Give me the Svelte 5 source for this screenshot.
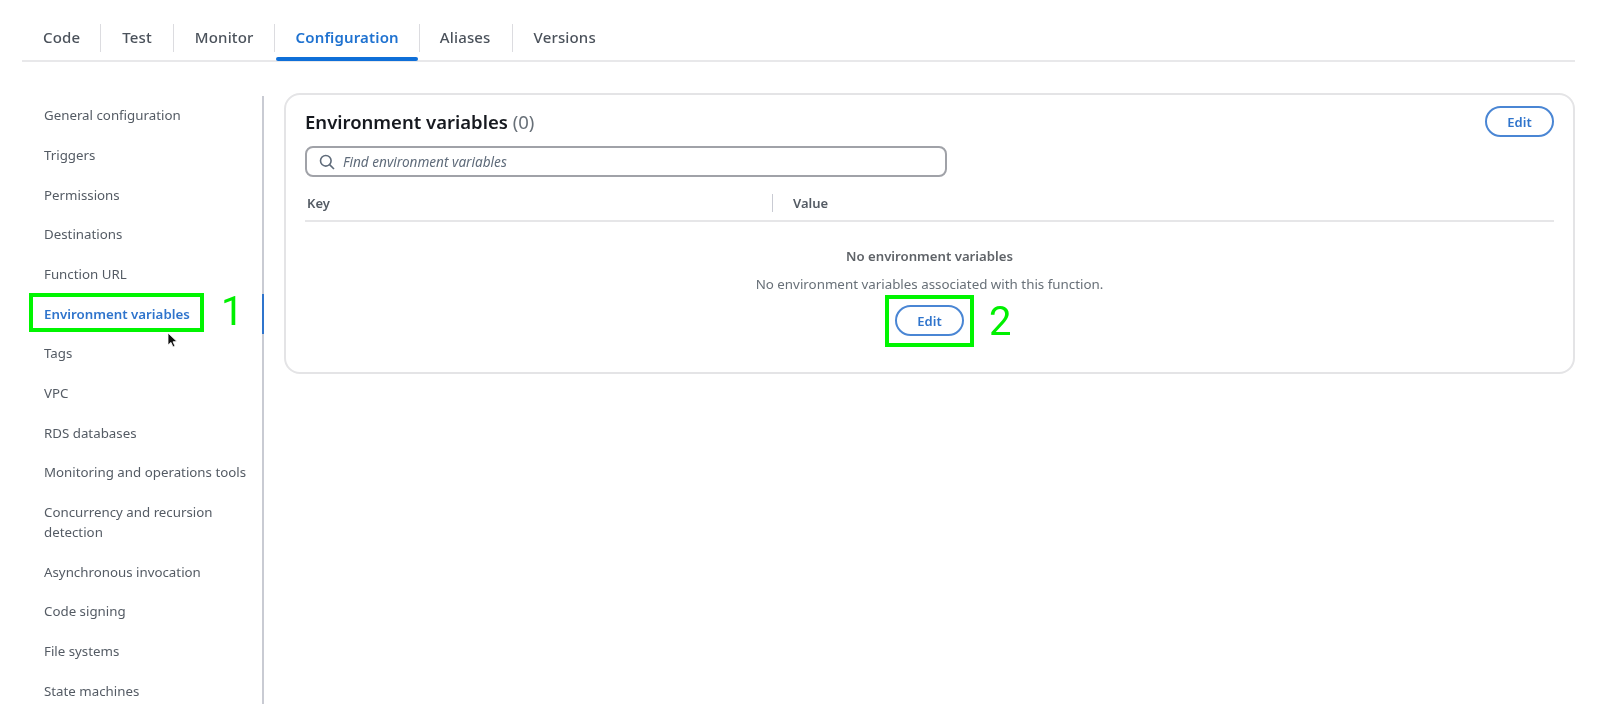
<script>
  const tabs = ['Code', 'Test', 'Monitor', 'Configuration', 'Aliases', 'Versions'];
  const sections = [
    'General configuration', 'Triggers', 'Permissions', 'Destinations', 'Function URL',
    'Environment variables', 'Tags', 'VPC', 'RDS databases', 'Monitoring and operations tools',
    'Concurrency and recursion detection', 'Asynchronous invocation', 'Code signing',
    'File systems', 'State machines'
  ];
  const activeTab = 'Configuration';
  const activeSection = 'Environment variables';
</script>

<div class="page">
  <div class="tabs">
    {#each tabs as tab}
      <div class="tab" class:active={tab === activeTab}><span>{tab}</span></div>
    {/each}
  </div>

  <div class="content">
    <nav class="side">
      {#each sections as section}
        <a class="link" class:current={section === activeSection} href="#top">{section}</a>
      {/each}
    </nav>

    <section class="card">
      <div class="card-head">
        <h2>Environment variables <span class="count">(0)</span></h2>
        <button class="edit">Edit</button>
      </div>
      <div class="search">
        <svg width="16" height="16" viewBox="0 0 16 16" fill="none" stroke="#5f6b7a" stroke-width="1.6">
          <circle cx="6.8" cy="6.8" r="5.3" />
          <path d="M10.6 10.6 L15 15" />
        </svg>
        <span>Find environment variables</span>
      </div>
      <div class="table-head">
        <div class="col key">Key</div>
        <div class="col value">Value</div>
      </div>
      <div class="empty">
        <strong>No environment variables</strong>
        <p>No environment variables associated with this function.</p>
        <button class="edit">Edit</button>
      </div>
    </section>
  </div>

  <div class="mark mark-one"></div>
  <div class="num num-one">1</div>
  <div class="mark mark-two"></div>
  <div class="num num-two">2</div>
  <svg class="cursor" width="12" height="18" viewBox="0 0 12 18">
    <path d="M1 1 L1 13 L4 10.4 L6 15 L8 14 L6 9.8 L10 9.6 Z" fill="#111" stroke="#fff" stroke-width="0.8" />
  </svg>
</div>

<style>
  :global(body) {
    margin: 0;
    background: #fff;
  }

  .page {
    position: relative;
    width: 1597px;
    height: 704px;
    overflow: hidden;
    box-sizing: border-box;
    padding: 24px 22px 0;
    font-family: "Noto Sans", "Open Sans", sans-serif;
    color: #545b64;
    filter: blur(0.4px);
  }

  .tabs {
    display: flex;
    height: 36px;
    border-bottom: 2px solid #e8e8ea;
  }

  .tab {
    position: relative;
    box-sizing: border-box;
    height: 28px;
    display: flex;
    align-items: center;
    padding: 0 20px 2px 21px;
    border-right: 1px solid #dcdce0;
    font-size: 15px;
    font-weight: 500;
    letter-spacing: 0.15px;
    color: #4b525b;
  }

  .tab:nth-child(2) {
    padding-right: 21px;
  }

  .tab:last-child {
    border-right: 0;
  }

  .tab.active {
    color: #1f72d0;
    font-weight: 600;
  }

  .tab.active + .tab {
    padding-left: 20px;
    padding-right: 21px;
  }

  .tab.active::after {
    content: '';
    position: absolute;
    left: 1px;
    right: 1px;
    top: 33px;
    height: 4px;
    border-radius: 2px;
    background: #0f6fd8;
  }

  .content {
    display: flex;
    align-items: flex-start;
    margin-top: 31.5px;
  }

  .side {
    box-sizing: border-box;
    width: 242px;
    height: 620px;
    margin-top: 2px;
    padding-right: 12px;
    border-right: 2px solid #c9cbd3;
    flex: none;
    display: flex;
    flex-direction: column;
    position: relative;
  }

  .link {
    display: block;
    padding: 9.7px 0 10px 22px;
    font-size: 13.3px;
    line-height: 20px;
    color: #545b64;
    text-decoration: none;
  }

  .link.current {
    color: #2f74cc;
    font-weight: 600;
    position: relative;
  }

  .link.current::after {
    content: '';
    position: absolute;
    top: 0;
    bottom: 0;
    right: -14px;
    width: 2px;
    background: #2f74cc;
  }

  .card {
    box-sizing: border-box;
    width: 1291px;
    height: 281px;
    margin-left: 20px;
    margin-top: -0.5px;
    padding: 10px 19px 0;
    border: 2px solid #e4e4e6;
    border-radius: 16px;
  }

  .card-head {
    display: flex;
    align-items: center;
    justify-content: space-between;
    height: 33px;
  }

  h2 {
    margin: 0;
    font-size: 18.5px;
    font-weight: 600;
    color: #16191f;
  }

  .count {
    font-weight: 400;
    color: #687078;
  }

  .edit {
    box-sizing: border-box;
    width: 69px;
    height: 31px;
    border: 2px solid #4a86d4;
    border-radius: 16px;
    background: #fff;
    color: #2f74cc;
    font: 600 13px "Noto Sans", sans-serif;
  }

  .search {
    box-sizing: border-box;
    display: flex;
    align-items: center;
    gap: 8px;
    width: 642px;
    height: 31px;
    margin-top: 8px;
    padding-left: 12px;
    border: 2px solid #a0a2a8;
    border-radius: 8px;
    font-size: 13.6px;
    font-style: italic;
    color: #5f6b7a;
  }

  .table-head {
    display: flex;
    height: 45px;
    padding-top: 8px;
    box-sizing: border-box;
    align-items: center;
    border-bottom: 2px solid #e6e6e8;
  }

  .col {
    font-size: 13px;
    font-weight: 600;
    color: #545b64;
  }

  .key {
    width: 465px;
    padding-left: 2px;
    height: 18px;
    line-height: 18px;
    border-right: 1px solid #c9cbd3;
    margin-right: 20px;
  }

  .empty {
    display: flex;
    flex-direction: column;
    align-items: center;
    padding-top: 24px;
    font-size: 13.35px;
    color: #687078;
  }

  .empty strong {
    font-size: 13.2px;
    line-height: 20px;
    font-weight: 600;
    color: #5f6368;
  }

  .empty p {
    margin: 7.5px 0 0;
    line-height: 20px;
  }

  .empty .edit {
    margin-top: 11.5px;
  }

  .mark {
    position: absolute;
    box-sizing: border-box;
    border: 4.5px solid #00f500;
  }

  .mark-one {
    left: 29px;
    top: 293px;
    width: 175px;
    height: 39px;
  }

  .mark-two {
    left: 885px;
    top: 295px;
    width: 89px;
    height: 52px;
  }

  .num {
    position: absolute;
    font-family: Roboto, sans-serif;
    font-size: 40px;
    line-height: 40px;
    color: #00f000;
  }

  .num-one {
    left: 221px;
    top: 292px;
  }

  .num-two {
    left: 989px;
    top: 302px;
  }

  .cursor {
    position: absolute;
    left: 167px;
    top: 332px;
  }
</style>
